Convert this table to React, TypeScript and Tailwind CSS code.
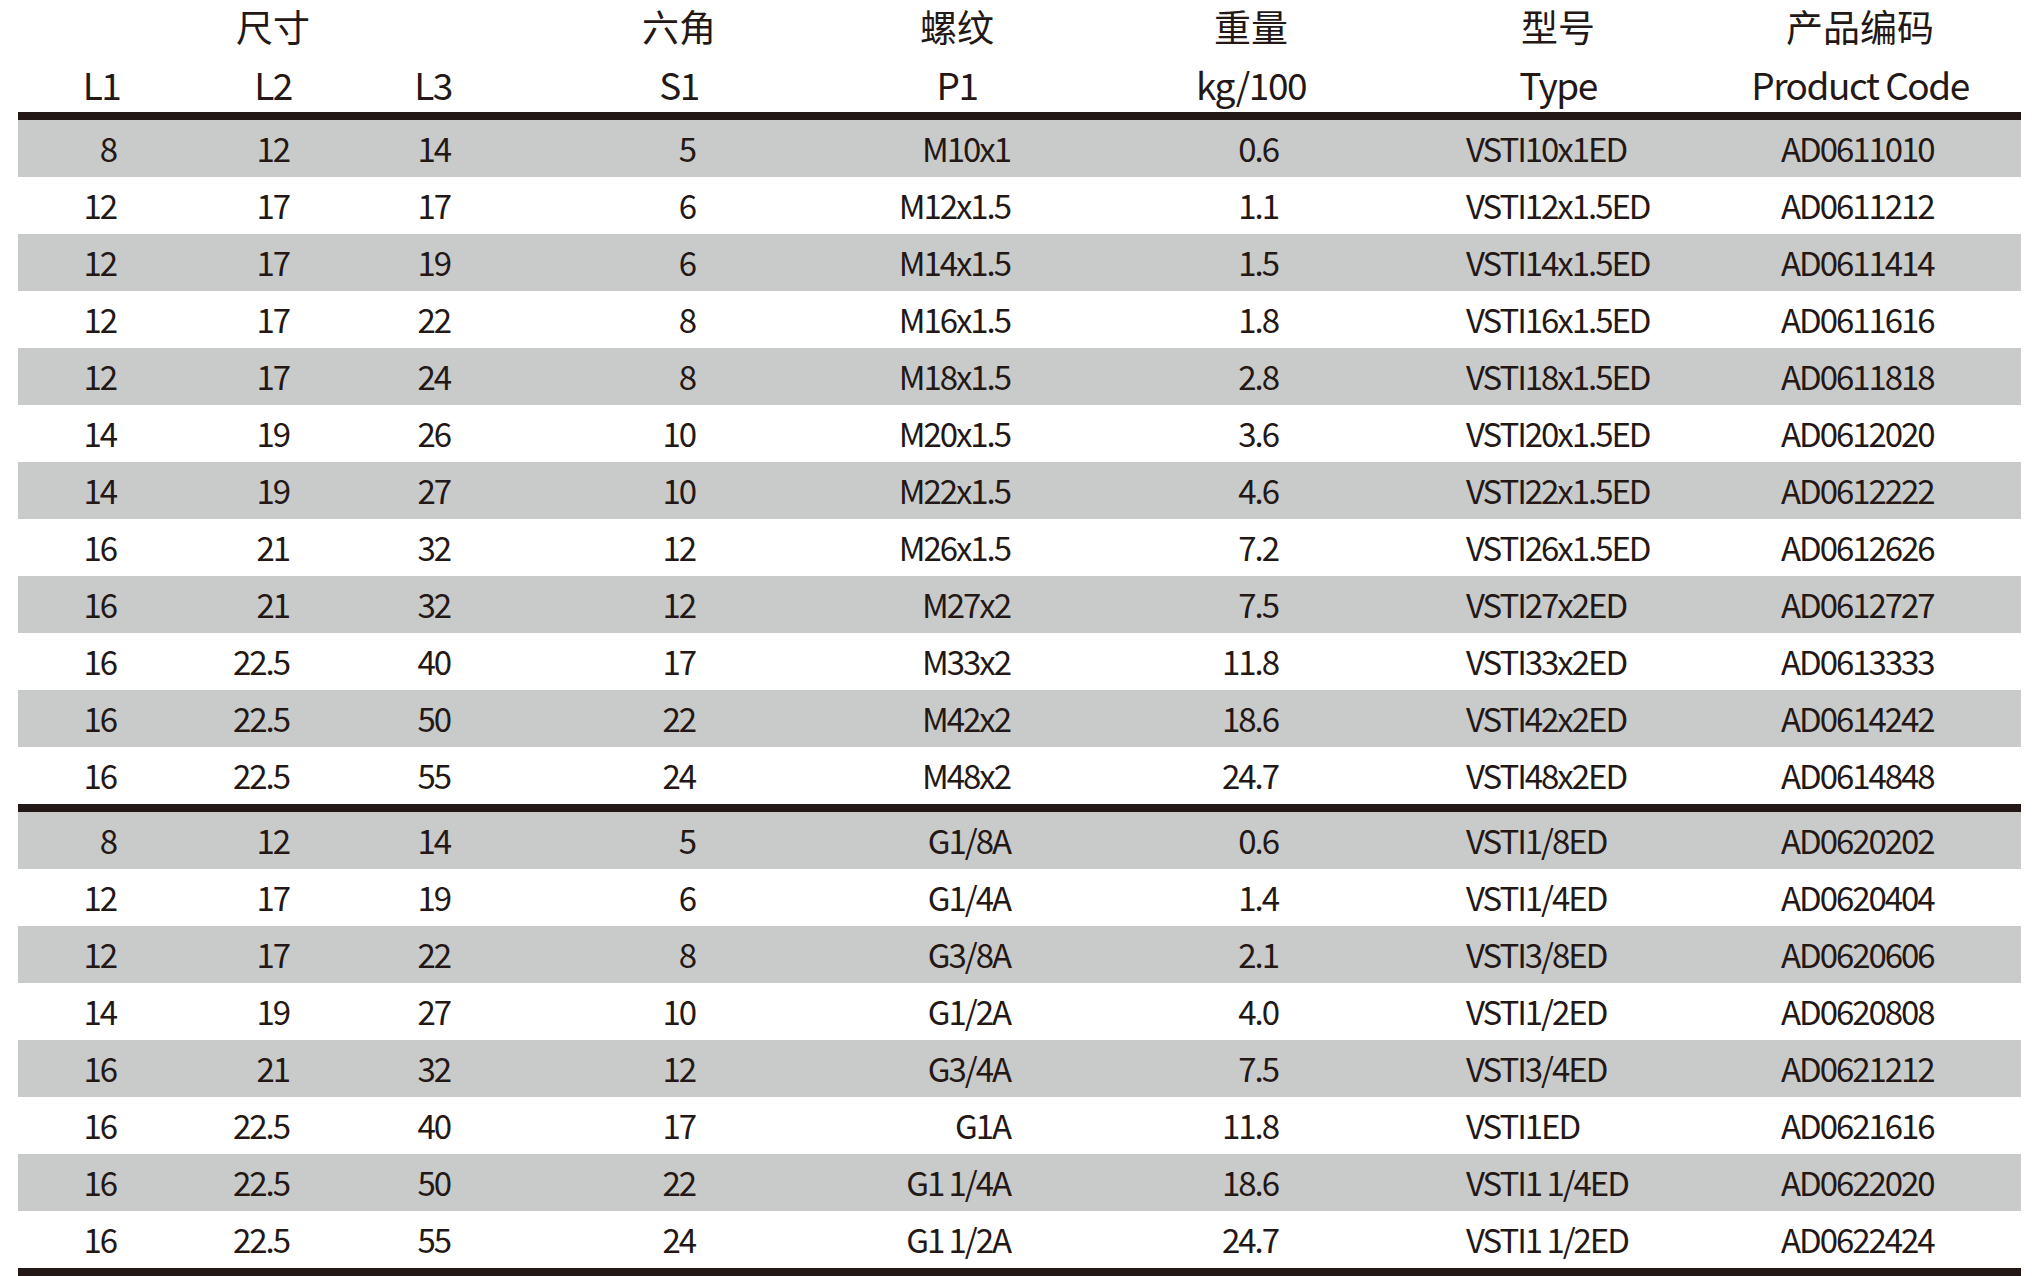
const blockA = [
  ["8", "12", "14", "5", "M10x1", "0.6", "VSTI10x1ED", "AD0611010"],
  ["12", "17", "17", "6", "M12x1.5", "1.1", "VSTI12x1.5ED", "AD0611212"],
  ["12", "17", "19", "6", "M14x1.5", "1.5", "VSTI14x1.5ED", "AD0611414"],
  ["12", "17", "22", "8", "M16x1.5", "1.8", "VSTI16x1.5ED", "AD0611616"],
  ["12", "17", "24", "8", "M18x1.5", "2.8", "VSTI18x1.5ED", "AD0611818"],
  ["14", "19", "26", "10", "M20x1.5", "3.6", "VSTI20x1.5ED", "AD0612020"],
  ["14", "19", "27", "10", "M22x1.5", "4.6", "VSTI22x1.5ED", "AD0612222"],
  ["16", "21", "32", "12", "M26x1.5", "7.2", "VSTI26x1.5ED", "AD0612626"],
  ["16", "21", "32", "12", "M27x2", "7.5", "VSTI27x2ED", "AD0612727"],
  ["16", "22.5", "40", "17", "M33x2", "11.8", "VSTI33x2ED", "AD0613333"],
  ["16", "22.5", "50", "22", "M42x2", "18.6", "VSTI42x2ED", "AD0614242"],
  ["16", "22.5", "55", "24", "M48x2", "24.7", "VSTI48x2ED", "AD0614848"],
];

const blockB = [
  ["8", "12", "14", "5", "G1/8A", "0.6", "VSTI1/8ED", "AD0620202"],
  ["12", "17", "19", "6", "G1/4A", "1.4", "VSTI1/4ED", "AD0620404"],
  ["12", "17", "22", "8", "G3/8A", "2.1", "VSTI3/8ED", "AD0620606"],
  ["14", "19", "27", "10", "G1/2A", "4.0", "VSTI1/2ED", "AD0620808"],
  ["16", "21", "32", "12", "G3/4A", "7.5", "VSTI3/4ED", "AD0621212"],
  ["16", "22.5", "40", "17", "G1A", "11.8", "VSTI1ED", "AD0621616"],
  ["16", "22.5", "50", "22", "G1 1/4A", "18.6", "VSTI1 1/4ED", "AD0622020"],
  ["16", "22.5", "55", "24", "G1 1/2A", "24.7", "VSTI1 1/2ED", "AD0622424"],
];

// per-column placement of the data text inside its grid cell
const cellPos = [
  "justify-end pr-[69px]",
  "justify-end pr-[72px]",
  "justify-end pr-[55px]",
  "justify-end pr-[158px]",
  "justify-end pr-[51px]",
  "justify-end pr-[163px]",
  "justify-start pl-[25px]",
  "justify-start pl-[82px]",
];

const grid =
  "grid grid-cols-[167px_176px_144px_348px_208px_380px_258px_322px]";

function Block({ rows }: { rows: string[][] }) {
  return (
    <div>
      {rows.map((row, i) => (
        <div
          key={i}
          className={`${grid} h-[57px] ${i % 2 === 0 ? "bg-[#c9caca]" : "bg-white"}`}
        >
          {row.map((val, j) => (
            <div key={j} className={`flex items-center whitespace-pre ${cellPos[j]}`}>
              {val}
            </div>
          ))}
        </div>
      ))}
    </div>
  );
}

export default function App() {
  return (
    <div
      className="min-h-[1276px] w-full bg-white text-[#231815]"
      style={{ fontFamily: '"Noto Sans CJK SC", "Noto Sans", sans-serif' }}
    >
      <div className="ml-[18px] w-[2003px] text-[33px] leading-none tracking-[-0.062em]">
        <div className="h-[112px]">
          <div className={`${grid} h-[56px] pb-[4px] text-[37px] tracking-normal`}>
            <div />
            <div className="flex items-center justify-center">尺寸</div>
            <div />
            <div className="flex items-center justify-center">六角</div>
            <div className="flex items-center justify-center">螺纹</div>
            <div className="flex items-center justify-center">重量</div>
            <div className="flex items-center justify-center pr-[24px]">型号</div>
            <div className="flex items-center justify-center">产品编码</div>
          </div>
          <div className={`${grid} h-[56px] text-[37px] tracking-[-0.04em]`}>
            <div className="flex items-center justify-center">L1</div>
            <div className="flex items-center justify-center">L2</div>
            <div className="flex items-center justify-center">L3</div>
            <div className="flex items-center justify-center">S1</div>
            <div className="flex items-center justify-center">P1</div>
            <div className="flex items-center justify-center">kg/100</div>
            <div className="flex items-center justify-center pr-[24px]">Type</div>
            <div className="flex items-center justify-center">Product Code</div>
          </div>
        </div>
        <div className="h-[8px] bg-[#231815]" />
        <Block rows={blockA} />
        <div className="h-[8px] bg-[#231815]" />
        <Block rows={blockB} />
        <div className="h-[8px] bg-[#231815]" />
      </div>
    </div>
  );
}
